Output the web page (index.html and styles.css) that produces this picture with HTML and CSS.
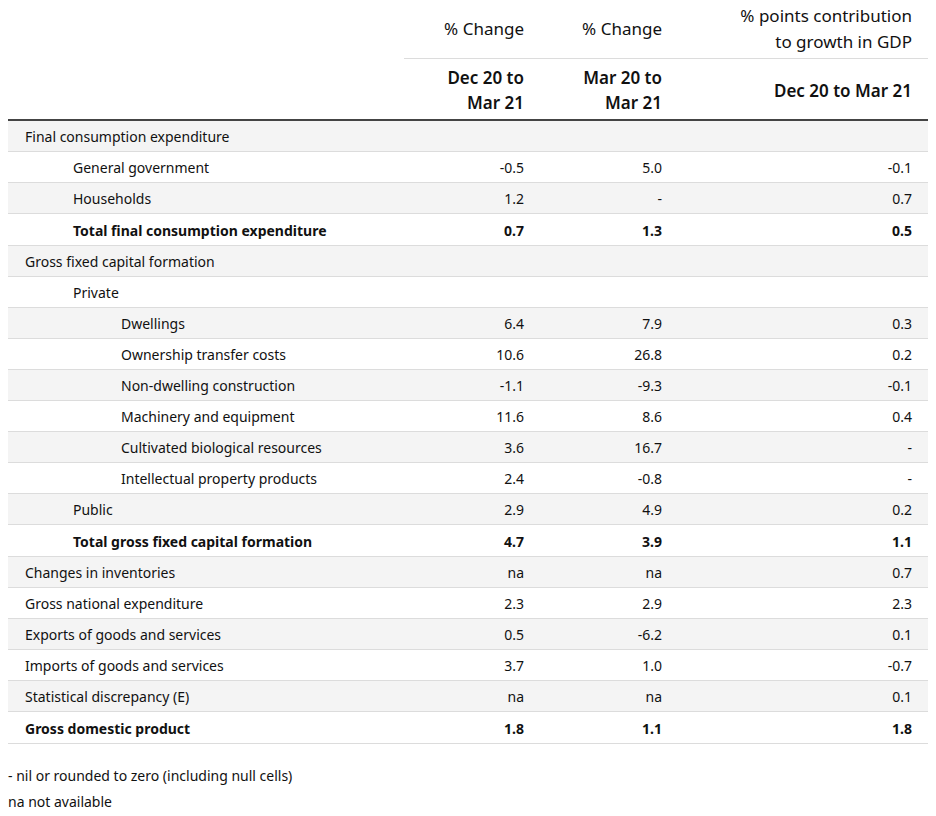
FILE: index.html
```html
<!DOCTYPE html>
<html>
<head>
<meta charset="utf-8">
<link rel="stylesheet" href="styles.css">
</head>
<body>
<table class="gdp">
  <colgroup>
    <col class="c-label"><col class="c-a"><col class="c-b"><col class="c-c">
  </colgroup>
  <thead>
    <tr class="h1">
      <th class="blank"></th>
      <th>% Change</th>
      <th>% Change</th>
      <th>% points contribution<br>to growth in GDP</th>
    </tr>
    <tr class="h2">
      <th class="blank"></th>
      <th>Dec 20 to<br>Mar 21</th>
      <th>Mar 20 to<br>Mar 21</th>
      <th>Dec 20 to Mar 21</th>
    </tr>
  </thead>
  <tbody>
    <tr><td class="l0">Final consumption expenditure</td><td></td><td></td><td></td></tr>
    <tr><td class="l1">General government</td><td>-0.5</td><td>5.0</td><td>-0.1</td></tr>
    <tr><td class="l1">Households</td><td>1.2</td><td>-</td><td>0.7</td></tr>
    <tr class="total"><td class="l1">Total final consumption expenditure</td><td>0.7</td><td>1.3</td><td>0.5</td></tr>
    <tr><td class="l0">Gross fixed capital formation</td><td></td><td></td><td></td></tr>
    <tr><td class="l1">Private</td><td></td><td></td><td></td></tr>
    <tr><td class="l2">Dwellings</td><td>6.4</td><td>7.9</td><td>0.3</td></tr>
    <tr><td class="l2">Ownership transfer costs</td><td>10.6</td><td>26.8</td><td>0.2</td></tr>
    <tr><td class="l2">Non-dwelling construction</td><td>-1.1</td><td>-9.3</td><td>-0.1</td></tr>
    <tr><td class="l2">Machinery and equipment</td><td>11.6</td><td>8.6</td><td>0.4</td></tr>
    <tr><td class="l2">Cultivated biological resources</td><td>3.6</td><td>16.7</td><td>-</td></tr>
    <tr><td class="l2">Intellectual property products</td><td>2.4</td><td>-0.8</td><td>-</td></tr>
    <tr><td class="l1">Public</td><td>2.9</td><td>4.9</td><td>0.2</td></tr>
    <tr class="total"><td class="l1">Total gross fixed capital formation</td><td>4.7</td><td>3.9</td><td>1.1</td></tr>
    <tr><td class="l0">Changes in inventories</td><td>na</td><td>na</td><td>0.7</td></tr>
    <tr><td class="l0">Gross national expenditure</td><td>2.3</td><td>2.9</td><td>2.3</td></tr>
    <tr><td class="l0">Exports of goods and services</td><td>0.5</td><td>-6.2</td><td>0.1</td></tr>
    <tr><td class="l0">Imports of goods and services</td><td>3.7</td><td>1.0</td><td>-0.7</td></tr>
    <tr><td class="l0">Statistical discrepancy (E)</td><td>na</td><td>na</td><td>0.1</td></tr>
    <tr class="total"><td class="l0">Gross domestic product</td><td>1.8</td><td>1.1</td><td>1.8</td></tr>
  </tbody>
</table>
<div class="notes">
  <p>- nil or rounded to zero (including null cells)</p>
  <p>na not available</p>
</div>
</body>
</html>
```

FILE: styles.css
```css
html, body {
  margin: 0;
  background: #fff;
}
body {
  padding: 0 8px;
  font-family: "Noto Sans", "Open Sans", "DejaVu Sans", sans-serif;
  color: #111;
}
.gdp {
  width: 920px;
  table-layout: fixed;
  border-collapse: collapse;
}
.c-label { width: 396px; }
.c-a { width: 136px; }
.c-b { width: 138px; }
.c-c { width: 250px; }

.gdp th {
  font-size: 17px;
  line-height: 26px;
  text-align: right;
  vertical-align: middle;
  color: #111;
}
.h1 th {
  font-weight: 400;
  padding: 3px 16px 3px;
  border-bottom: 1px solid #dcdcdc;
}
.h1 th.blank { border-bottom: none; }
.h2 th {
  font-weight: 600;
  padding: 6px 16px 4px;
  line-height: 25px;
  border-bottom: 2px solid #444;
}
.gdp td {
  font-size: 14px;
  line-height: 20px;
  padding: 6px 16px 4px;
  text-align: right;
  vertical-align: top;
  border-bottom: 1px solid #dcdcdc;
  white-space: nowrap;
}
.gdp tbody tr:nth-child(odd) td { background: #f4f4f4; }
.gdp td.l0 { text-align: left; padding-left: 17px; }
.gdp td.l1 { text-align: left; padding-left: 65px; }
.gdp td.l2 { text-align: left; padding-left: 113px; }
.gdp tr.total td {
  font-weight: 700;
  padding-top: 7px;
  padding-bottom: 4px;
}

.notes {
  margin-top: 19px;
  font-size: 14px;
}
.notes p {
  margin: 0;
  line-height: 26px;
}
```
